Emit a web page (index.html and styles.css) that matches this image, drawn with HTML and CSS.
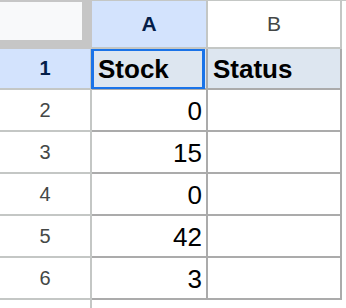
FILE: index.html
```html
<!DOCTYPE html>
<html>
<head>
<meta charset="utf-8">
<link rel="stylesheet" href="styles.css">
</head>
<body>
<div class="sheet">
  <div class="corner"><div class="corner-box"></div></div>
  <div class="col-head col-sel">A</div>
  <div class="col-head">B</div>
  <div class="filler head-fill"></div>

  <div class="row-head row-sel">1</div>
  <div class="cell hdr a1">Stock</div>
  <div class="cell hdr">Status</div>
  <div class="filler"></div>

  <div class="row-head">2</div>
  <div class="cell num">0</div>
  <div class="cell"></div>
  <div class="filler"></div>

  <div class="row-head">3</div>
  <div class="cell num">15</div>
  <div class="cell"></div>
  <div class="filler"></div>

  <div class="row-head">4</div>
  <div class="cell num">0</div>
  <div class="cell"></div>
  <div class="filler"></div>

  <div class="row-head">5</div>
  <div class="cell num">42</div>
  <div class="cell"></div>
  <div class="filler"></div>

  <div class="row-head">6</div>
  <div class="cell num">3</div>
  <div class="cell"></div>
  <div class="filler"></div>

  <div class="row-head tail"></div>
  <div class="filler"></div>
  <div class="filler"></div>
  <div class="filler"></div>
</div>
</body>
</html>
```
FILE: styles.css
```css
html, body {
  margin: 0;
  padding: 0;
  background: #ffffff;
}

body {
  width: 346px;
  height: 308px;
  overflow: hidden;
  font-family: "Liberation Sans", Arial, sans-serif;
}

.sheet {
  display: grid;
  grid-template-columns: 92px 116px 134px 4px;
  grid-template-rows: 49px 41px 42px 42px 42px 42px 42px 8px;
}

.sheet > div {
  box-sizing: border-box;
}

.corner {
  background: #c6c6c6;
  padding-top: 2px;
}

.corner-box {
  width: 82px;
  height: 38px;
  background: #f8f9fa;
}

.col-head {
  border-top: 1px solid #c4c7c5;
  border-right: 2px solid #c4c7c5;
  border-bottom: 2px solid #c4c7c5;
  background: #ffffff;
  color: #444746;
  font-size: 21px;
  display: flex;
  align-items: center;
  justify-content: center;
}

.col-sel {
  background: #d3e3fd;
  color: #041e49;
  font-weight: bold;
}

.head-fill {
  border-top: 1px solid #c4c7c5;
}

.row-head {
  border-right: 2px solid #c4c7c5;
  border-bottom: 2px solid #c4c7c5;
  background: #ffffff;
  color: #444746;
  font-size: 20px;
  display: flex;
  align-items: center;
  justify-content: center;
}

.row-sel {
  background: #d3e3fd;
  color: #041e49;
  font-weight: bold;
}

.tail {
  border-bottom: none;
}

.cell {
  border-right: 2px solid #ababab;
  border-bottom: 2px solid #ababab;
  background: #ffffff;
  color: #000000;
  font-size: 26px;
  display: flex;
  align-items: flex-end;
  padding: 0 4px 3px 5px;
}

.hdr {
  background: #dde6f0;
  font-weight: bold;
}

.num {
  justify-content: flex-end;
}

.a1 {
  position: relative;
  padding-left: 6px;
}

.a1::after {
  content: "";
  position: absolute;
  left: -1px;
  right: 1px;
  top: 0;
  bottom: -1px;
  border-style: solid;
  border-color: #1a73e8;
  border-width: 2px 3px 2px 3px;
}

.filler {
  background: #ffffff;
}
```
